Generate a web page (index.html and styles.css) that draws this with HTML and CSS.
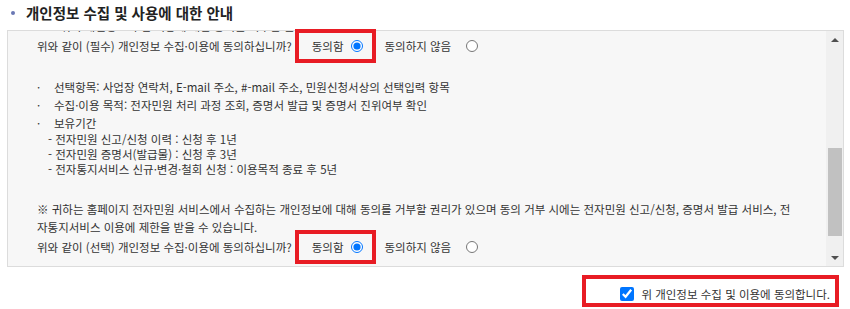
FILE: index.html
```html
<!DOCTYPE html>
<html lang="ko">
<head>
    <meta charset="UTF-8">
    <title>개인정보 수집 및 사용에 대한 안내</title>
    <link rel="stylesheet" href="styles.css">
</head>
<body>
    <div class="agree-section">
        <h3 class="section-title">개인정보 수집 및 사용에 대한 안내</h3>
        <div class="terms-box">
            <div class="terms-content">
                <div class="cut-line"><p>- 위의 개인정보 수집·이용에 대한 동의를 거부할 권리가 있습니다.</p></div>
                <div class="question">
                    <span class="q-text">위와 같이 (필수) 개인정보 수집·이용에 동의하십니까?</span>
                    <label class="opt marked">동의함<input type="radio" name="agree1" checked></label>
                    <label class="opt">동의하지 않음<input type="radio" name="agree1"></label>
                </div>
                <ul class="items">
                    <li>선택항목: 사업장 연락처, E-mail 주소, #-mail 주소, 민원신청서상의 선택입력 항목</li>
                    <li>수집·이용 목적: 전자민원 처리 과정 조회, 증명서 발급 및 증명서 진위여부 확인</li>
                    <li>보유기간</li>
                </ul>
                <ul class="periods">
                    <li>- 전자민원 신고/신청 이력 : 신청 후 1년</li>
                    <li>- 전자민원 증명서(발급물) : 신청 후 3년</li>
                    <li>- 전자통지서비스 신규·변경·철회 신청 : 이용목적 종료 후 5년</li>
                </ul>
                <p class="note">※ 귀하는 홈페이지 전자민원 서비스에서 수집하는 개인정보에 대해 동의를 거부할 권리가 있으며 동의 거부 시에는 전자민원 신고/신청, 증명서 발급 서비스, 전<br>자통지서비스 이용에 제한을 받을 수 있습니다.</p>
                <div class="question">
                    <span class="q-text">위와 같이 (선택) 개인정보 수집·이용에 동의하십니까?</span>
                    <label class="opt marked">동의함<input type="radio" name="agree2" checked></label>
                    <label class="opt">동의하지 않음<input type="radio" name="agree2"></label>
                </div>
            </div>
            <div class="scrollbar">
                <span class="sb-btn"><i class="arrow-up"></i></span>
                <span class="sb-track"><span class="sb-thumb"></span></span>
                <span class="sb-btn"><i class="arrow-down"></i></span>
            </div>
        </div>
        <div class="agree-all">
            <label class="check-label"><input type="checkbox" checked>위 개인정보 수집 및 이용에 동의합니다.</label>
        </div>
    </div>
</body>
</html>
```
FILE: styles.css
```css
body {
    margin: 0;
    font-family: "Noto Sans CJK KR", "Noto Sans", sans-serif;
    font-size: 11.5px;
    color: #333;
    background-color: #fff;
}
.agree-section {
    width: 837px;
    padding-left: 7px;
}
.section-title {
    display: flex;
    align-items: center;
    margin: 0 0 5px;
    height: 25px;
    font-size: 14.5px;
    font-weight: bold;
    color: #222;
}
.section-title::before {
    content: "";
    width: 4px;
    height: 4px;
    margin: 0 11px 0 4px;
    border-radius: 50%;
    background-color: #6a78b4;
}
.terms-box {
    display: flex;
    box-sizing: border-box;
    height: 237px;
    border: 1px solid #dcdcdc;
    background-color: #f7f7f7;
}
.terms-content {
    flex: 1;
    padding: 0 6px 0 29px;
}
.cut-line {
    height: 2px;
    overflow: hidden;
    padding-left: 16px;
}
.cut-line p {
    margin: -12px 0 0;
    line-height: 14px;
}
.question {
    display: flex;
    align-items: center;
    height: 34px;
    margin-top: -4px;
}
.q-text {
    margin-right: 3px;
}
.opt {
    display: inline-flex;
    align-items: center;
    margin-left: 8px;
}
.opt input {
    width: 12px;
    height: 12px;
    margin: 0 0 0 15px;
}
.opt.marked {
    box-sizing: border-box;
    height: 34px;
    margin-left: 0;
    padding: 0 9px 0 13px;
    border: 4px solid #e81c24;
}
.opt.marked input {
    margin-left: 8px;
}
.items {
    list-style: none;
    margin: 15px 0 0;
    padding: 0;
    line-height: 18px;
}
.items li {
    display: flex;
}
.items li::before {
    content: "·";
    width: 17px;
}
.periods {
    list-style: none;
    margin: 0;
    padding: 0 0 0 11px;
    line-height: 15px;
}
.note {
    margin: 23px 0 0;
    line-height: 18px;
}
.note + .question {
    margin-top: -6px;
}
.scrollbar {
    display: flex;
    flex-direction: column;
    width: 17px;
    background-color: #f0f0f0;
}
.sb-btn {
    display: flex;
    align-items: center;
    justify-content: center;
    height: 17px;
}
.arrow-up, .arrow-down {
    width: 0;
    height: 0;
    border-left: 4px solid transparent;
    border-right: 4px solid transparent;
}
.arrow-up {
    border-bottom: 4px solid #505050;
}
.arrow-down {
    border-top: 4px solid #505050;
}
.sb-track {
    flex: 1;
    padding: 100px 1px 0 2px;
}
.sb-thumb {
    display: block;
    height: 88px;
    background-color: #c1c1c1;
}
.agree-all {
    display: flex;
    justify-content: flex-end;
    margin-top: 8px;
    padding-right: 5px;
}
.check-label {
    display: inline-flex;
    align-items: center;
    box-sizing: border-box;
    height: 32px;
    padding: 6px 5px 0 30px;
    border: 4px solid #e81c24;
}
.check-label input {
    width: 14px;
    height: 14px;
    margin: 0 7px 0 4px;
}
```
